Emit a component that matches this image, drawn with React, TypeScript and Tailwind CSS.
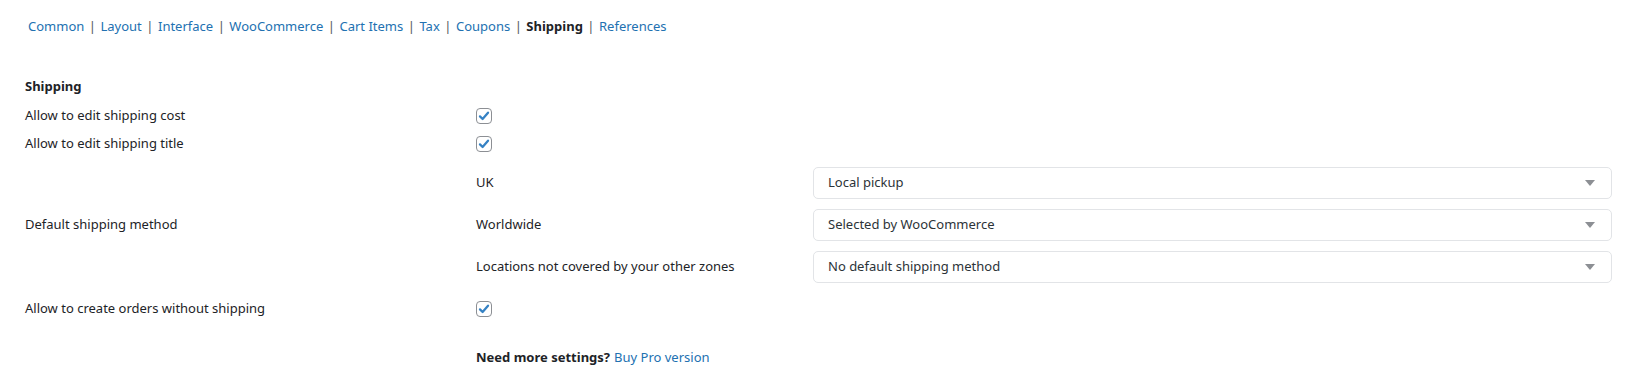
import React from "react";

const font = { fontFamily: '"Segoe UI", "Noto Sans", "Open Sans", sans-serif' };

function Check() {
  return (
    <span className="flex h-4 w-4 items-center justify-center rounded-[4px] border border-[#8c8f94] bg-white">
      <svg viewBox="0 0 16 16" className="h-[14px] w-[14px]">
        <path d="M3.4 8.4 L6.4 11.4 L12.6 4.2" fill="none" stroke="#3582c4" strokeWidth="2.6" strokeLinecap="round" strokeLinejoin="round" />
      </svg>
    </span>
  );
}

function Select({ value }: { value: string }) {
  return (
    <div className="flex h-[32px] w-[799px] items-center justify-between rounded-[5px] border border-[#e2e4e7] bg-white pl-[14px] pr-[16px] text-[#2c3338]">
      <span>{value}</span>
      <svg width="10" height="6" viewBox="0 0 10 6">
        <path d="M0 0 L10 0 L5 6 Z" fill="#8c8f94" />
      </svg>
    </div>
  );
}

export default function App() {
  const tabs = ["Common", "Layout", "Interface", "WooCommerce", "Cart Items", "Tax", "Coupons", "Shipping", "References"];
  return (
    <div className="min-h-[390px] w-[1649px] bg-white text-[13px] text-[#1d2327]" style={font}>
      <div className="flex h-[54px] items-center pl-[28px]">
        {tabs.map((t, i) => (
          <React.Fragment key={t}>
            {i > 0 && <span className="px-[4.5px] text-[#50575e]">|</span>}
            {t === "Shipping" ? (
              <span className="font-bold text-[#1d2327]">{t}</span>
            ) : (
              <a className="text-[#2271b1]">{t}</a>
            )}
          </React.Fragment>
        ))}
      </div>
      <div className="pl-[25px]">
        <div className="mt-[19px] flex h-[28px] items-center font-bold">Shipping</div>
        <div className="flex h-[29px] items-center">
          <div className="w-[451px]">Allow to edit shipping cost</div>
          <Check />
        </div>
        <div className="flex h-[28px] items-center">
          <div className="w-[451px]">Allow to edit shipping title</div>
          <Check />
        </div>
        <div className="mt-[4px] flex items-center">
          <div className="w-[451px]">Default shipping method</div>
          <div className="flex flex-col">
            {[
              ["UK", "Local pickup"],
              ["Worldwide", "Selected by WooCommerce"],
              ["Locations not covered by your other zones", "No default shipping method"],
            ].map(([l, v]) => (
              <div key={l} className="flex h-[42px] items-center">
                <div className="w-[337px]">{l}</div>
                <Select value={v} />
              </div>
            ))}
          </div>
        </div>
        <div className="mt-[7px] flex h-[28px] items-center">
          <div className="w-[451px]">Allow to create orders without shipping</div>
          <Check />
        </div>
        <div className="mt-[21px] flex h-[28px] items-center pl-[451px]">
          <span className="font-bold">Need more settings?</span>
          <a className="ml-[4px] text-[#2271b1]">Buy Pro version</a>
        </div>
      </div>
    </div>
  );
}
